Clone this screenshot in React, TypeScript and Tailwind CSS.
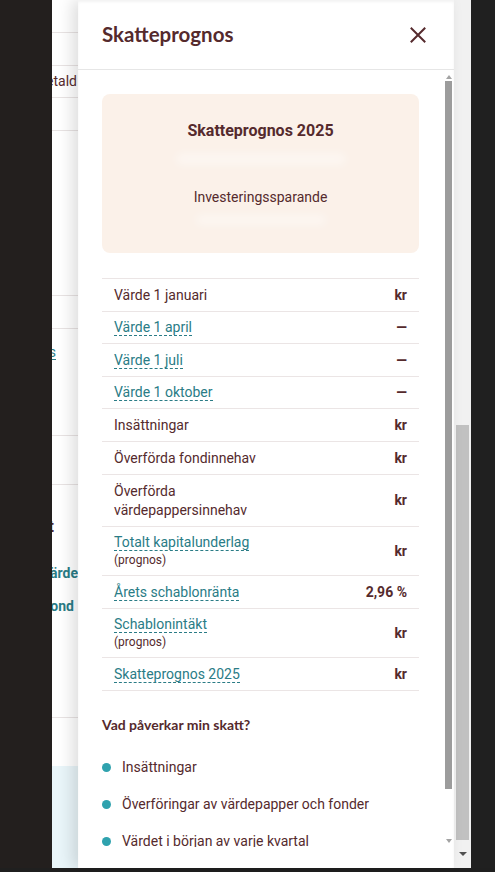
import React from "react";

const TEXT = "text-[#552a2d]";
const LINK = "text-[#2a7c86]";

type Row = {
  label: string;
  sub?: string;
  link?: boolean;
  value: string;
  h: string;
  twoLine?: boolean;
};

const rows: Row[] = [
  { label: "Värde 1 januari", value: "kr", h: "h-[33px]" },
  { label: "Värde 1 april", link: true, value: "—", h: "h-[32px]" },
  { label: "Värde 1 juli", link: true, value: "—", h: "h-[33px]" },
  { label: "Värde 1 oktober", link: true, value: "—", h: "h-[32px]" },
  { label: "Insättningar", value: "kr", h: "h-[33px]" },
  { label: "Överförda fondinnehav", value: "kr", h: "h-[33px]" },
  { label: "Överförda värdepappersinnehav", value: "kr", h: "h-[52px]", twoLine: true },
  { label: "Totalt kapitalunderlag", sub: "(prognos)", link: true, value: "kr", h: "h-[49px]" },
  { label: "Årets schablonränta", link: true, value: "2,96 %", h: "h-[33px]" },
  { label: "Schablonintäkt", sub: "(prognos)", link: true, value: "kr", h: "h-[49px]" },
  { label: "Skatteprognos 2025", link: true, value: "kr", h: "h-[33px]" },
];

function Blur({ w, h }: { w: string; h: string }) {
  return <div className={`${w} ${h} rounded-full bg-white/40 blur-[4px]`} />;
}

function BackgroundStrip() {
  return (
    <div className="w-[26px] shrink-0 bg-white overflow-hidden flex flex-col font-['Roboto',sans-serif] text-[14px] whitespace-nowrap">
      <div className="h-[33px] shrink-0 border-b border-[#e8e3e3]" />
      <div className="h-[33px] shrink-0 border-b border-[#e8e3e3]" />
      <div className={`h-[32px] shrink-0 border-b border-[#e8e3e3] flex items-center justify-end pr-[1px] ${TEXT}`}>
        <span>Utbetald</span>
      </div>
      <div className="h-[33px] shrink-0 border-b border-[#e8e3e3]" />
      <div className="h-[165px] shrink-0 border-b border-[#e8e3e3]" />
      <div className="h-[33px] shrink-0 border-b border-[#e8e3e3]" />
      <div className="h-[107px] shrink-0 border-b border-[#e8e3e3] flex flex-col">
        <div className={`mt-[14px] h-[18px] flex items-center justify-end pr-[22px] ${LINK}`}>
          <span className="underline underline-offset-2">Skatteprognos</span>
        </div>
      </div>
      <div className="h-[49px] shrink-0 border-b border-[#e8e3e3]" />
      <div className="h-[233px] shrink-0 border-b border-[#e8e3e3] flex flex-col">
        <div className={`mt-[32px] h-[20px] flex items-center justify-end pr-[24px] font-bold text-[16px] ${TEXT}`}>
          <span>Skatt</span>
        </div>
        <div className={`mt-[26px] h-[20px] flex items-center justify-end font-bold ${LINK}`}>
          <span>Överförda värde</span>
        </div>
        <div className={`mt-[13px] h-[20px] flex items-center justify-end pr-[4px] font-bold ${LINK}`}>
          <span>Överförda fond</span>
        </div>
      </div>
      <div className="h-[48px] shrink-0" />
      <div className="flex-1 bg-[#e9f5f9]" />
    </div>
  );
}

function InnerScrollbar() {
  return (
    <div className="w-[7px] flex flex-col items-center mr-[2px] ml-[2px]">
      <div className="h-[11px] flex items-end justify-center pb-[2px]">
        <div className="w-0 h-0 border-l-[3px] border-r-[3px] border-b-[4px] border-l-transparent border-r-transparent border-b-[#a3a3a3]" />
      </div>
      <div className="w-[7px] h-[708px] bg-[#9c9c9c]" />
      <div className="flex-1" />
      <div className="h-[8px] flex items-start justify-center">
        <div className="w-0 h-0 border-l-[3px] border-r-[3px] border-t-[4px] border-l-transparent border-r-transparent border-t-[#a3a3a3]" />
      </div>
    </div>
  );
}

function OuterScrollbar() {
  return (
    <div className="w-[17px] shrink-0 bg-[#f1f1f1] flex flex-col items-center">
      <div className="h-[425px]" />
      <div className="w-[13px] h-[415px] bg-[#c1c1c1]" />
      <div className="flex-1 flex items-center justify-center">
        <div className="w-0 h-0 border-l-[4px] border-r-[4px] border-t-[4px] border-l-transparent border-r-transparent border-t-[#505050]" />
      </div>
    </div>
  );
}

function Modal() {
  return (
    <div className="relative z-10 w-[376px] shrink-0 bg-white flex flex-col shadow-[-6px_0_14px_rgba(0,0,0,0.13),inset_0_2px_3px_rgba(0,0,0,0.05)] font-['Roboto',sans-serif]">
      <div className="h-[70px] shrink-0 border-b border-[#e6e6e6] flex items-center justify-between pl-6 pr-[28px]">
        <span className={`font-['Lato',sans-serif] font-bold text-[20.5px] ${TEXT}`}>Skatteprognos</span>
        <svg width="16" height="16" viewBox="0 0 16 16" fill="none" className="mt-[1px]">
          <path d="M1.5 1.5 L14.5 14.5 M14.5 1.5 L1.5 14.5" stroke="#552a2d" strokeWidth="2" strokeLinecap="square" />
        </svg>
      </div>
      <div className="h-[777px] shrink-0 flex">
        <div className="flex-1 overflow-hidden pl-6 pr-[24px] pt-6">
          <div className="h-[159px] rounded-[8px] bg-[#fbf1e9] flex flex-col items-center pt-[27px]">
            <div className={`leading-[20px] text-[16px] font-bold ${TEXT}`}>Skatteprognos 2025</div>
            <div className="h-[36px] flex items-center">
              <Blur w="w-[170px]" h="h-[12px]" />
            </div>
            <div className={`mt-[10px] leading-[20px] text-[14px] ${TEXT}`}>Investeringssparande</div>
            <div className="h-[26px] flex items-center">
              <Blur w="w-[130px]" h="h-[10px]" />
            </div>
          </div>

          <div className="mt-[25px] border-t border-[#ebe5e5]">
            {rows.map((r) => (
              <div
                key={r.label}
                className={`${r.h} border-b border-[#ebe5e5] flex items-center justify-between px-3`}
              >
                <div className="flex flex-col items-start">
                  {r.twoLine ? (
                    <span className={`text-[14px] leading-[19px] w-[150px] ${TEXT}`}>{r.label}</span>
                  ) : r.link ? (
                    <span className={`inline-block text-[14px] leading-[16px] border-b border-dashed border-[#2a7c86] ${LINK}`}>
                      {r.label}
                    </span>
                  ) : (
                    <span className={`text-[14px] leading-[16px] ${TEXT}`}>{r.label}</span>
                  )}
                  {r.sub && <span className={`text-[12px] leading-[16px] mt-[1px] ${TEXT}`}>{r.sub}</span>}
                </div>
                <span className={`text-[14px] font-bold ${TEXT}`}>{r.value}</span>
              </div>
            ))}
          </div>

          <div className={`mt-[25px] font-['Lato',sans-serif] font-bold text-[14px] leading-[18px] ${TEXT}`}>
            Vad påverkar min skatt?
          </div>

          <ul className="mt-[24px] flex flex-col gap-[19px]">
            {["Insättningar", "Överföringar av värdepapper och fonder", "Värdet i början av varje kvartal"].map((t) => (
              <li key={t} className="flex items-center gap-[11px] h-[18px]">
                <span className="w-[9px] h-[9px] rounded-full bg-[#2fa2ae] shrink-0" />
                <span className={`text-[14px] leading-[18px] ${TEXT}`}>{t}</span>
              </li>
            ))}
          </ul>
        </div>
        <InnerScrollbar />
      </div>
      <div className="flex-1" />
    </div>
  );
}

export default function App() {
  return (
    <div className="w-[495px] h-[872px] bg-[#231f1e] overflow-hidden flex flex-col">
      <div className="h-[868px] flex shrink-0">
        <div className="w-[52px] shrink-0" />
        <BackgroundStrip />
        <Modal />
        <OuterScrollbar />
        <div className="flex-1 bg-[#202020]" />
      </div>
      <div className="flex-1 bg-[#1f1f1f]" />
    </div>
  );
}
